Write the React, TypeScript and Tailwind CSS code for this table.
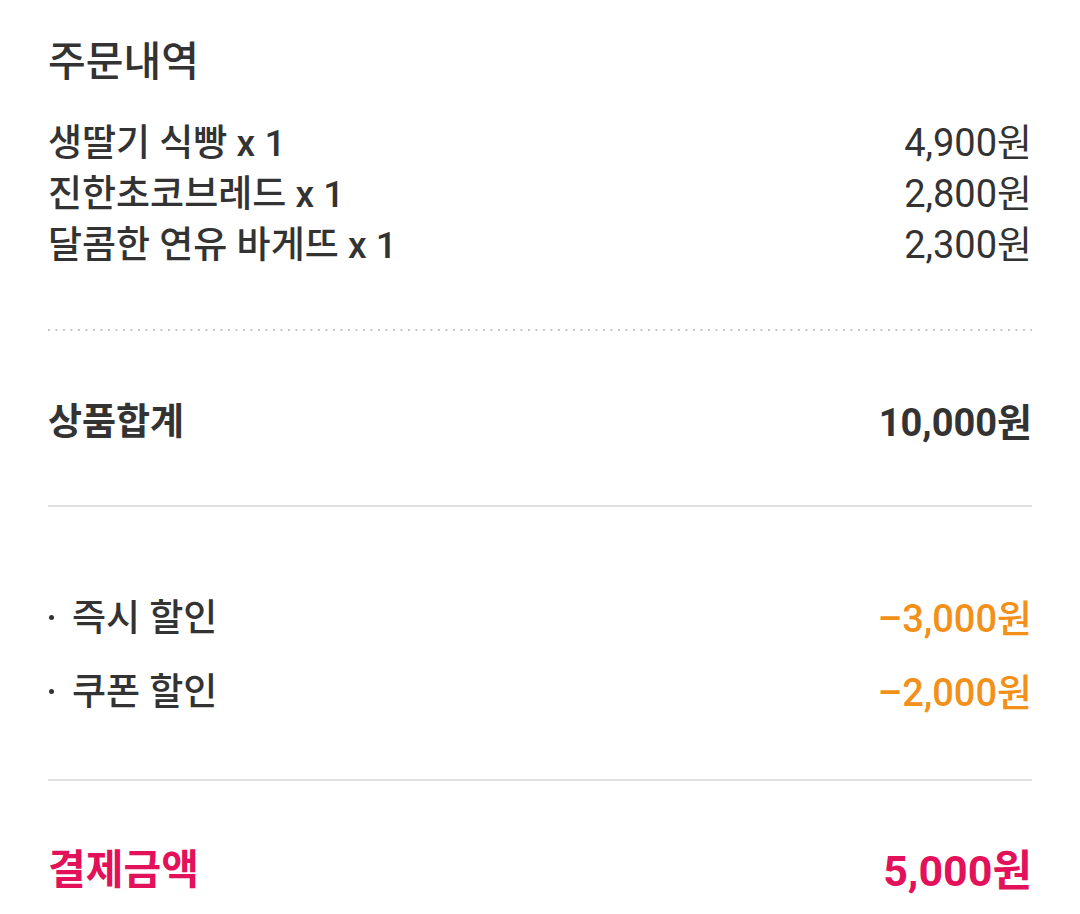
const items = [
  { name: "생딸기 식빵 x 1", price: "4,900원" },
  { name: "진한초코브레드 x 1", price: "2,800원" },
  { name: "달콤한 연유 바게뜨 x 1", price: "2,300원" },
];

const discounts = [
  { name: "즉시 할인", price: "–3,000원" },
  { name: "쿠폰 할인", price: "–2,000원" },
];

export default function App() {
  return (
    <div
      className="min-h-screen bg-white px-12 pt-[40px] text-[#333333]"
      style={{ fontFamily: 'Roboto, "Noto Sans CJK KR", sans-serif' }}
    >
      {/* 주문내역 */}
      <h2 className="text-[41px] font-medium leading-[44px]">주문내역</h2>

      <div className="mt-[34px]">
        {items.map((item) => (
          <div key={item.name} className="flex items-center justify-between h-[51px] text-[37px]">
            <span className="font-medium">{item.name}</span>
            <span className="text-[38px]">{item.price}</span>
          </div>
        ))}
      </div>

      <div className="mt-[58px] h-[2px] bg-[linear-gradient(to_right,#c4c4c4_1.5px,transparent_1.5px)] bg-[length:7.5px_2px]" />

      {/* 상품합계 */}
      <div className="mt-[67px] flex items-center justify-between h-[50px] text-[37px]">
        <span className="font-semibold">상품합계</span>
        <span className="font-bold text-[38px]">10,000원</span>
      </div>

      <div className="mt-[57px] h-[2px] bg-[#e0e0e0]" />

      {/* 할인 */}
      <div className="mt-[87px] flex flex-col gap-[24px]">
        {discounts.map((d) => (
          <div key={d.name} className="flex items-center justify-between h-[50px] text-[37px]">
            <span className="font-medium flex items-center">
              <span className="w-[5px] h-[5px] rounded-full bg-[#333333] ml-[1px] mr-[18px] -mt-[4px]" />
              {d.name}
            </span>
            <span className="font-medium text-[38px] text-[#f39019]">{d.price}</span>
          </div>
        ))}
      </div>

      <div className="mt-[61px] h-[2px] bg-[#e0e0e0]" />

      {/* 결제금액 */}
      <div className="mt-[65px] flex items-center justify-between h-[50px] text-[41px] font-bold text-[#e2115a]">
        <span>결제금액</span>
        <span className="text-[43px]">5,000원</span>
      </div>
    </div>
  );
}
